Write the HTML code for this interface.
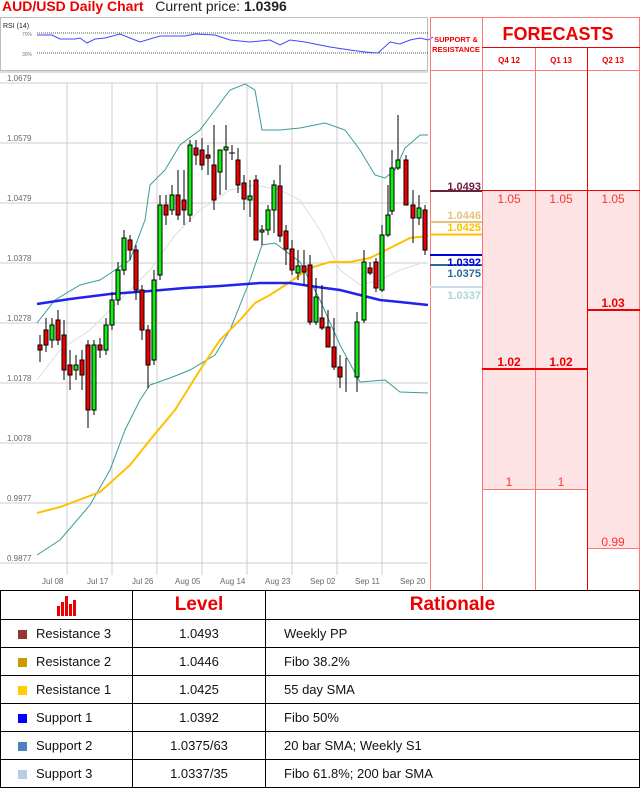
<!DOCTYPE html>
<html><head><meta charset="utf-8"><style>
*{margin:0;padding:0;box-sizing:border-box}
body{width:640px;height:786px;background:#fff;font-family:"Liberation Sans",sans-serif;position:relative;overflow:hidden}
.abs{position:absolute}
table{border-collapse:collapse;position:absolute;left:0;top:590px;width:640px;table-layout:fixed}
td{border:1px solid #000;height:28px;font-size:13px;color:#111;padding:0;line-height:14px}
.c{text-align:center}
.sq{display:inline-block;width:9px;height:9px;margin:0 9px 0 17px;vertical-align:-1px}
.hd{color:#e00;font-weight:bold;font-size:19px;text-align:center;height:29px}
</style></head><body>
<div class="abs" style="left:2px;top:-2px;font-size:14px"><span style="color:#e00;font-weight:bold">AUD/USD Daily Chart</span>&nbsp;&nbsp; <span style="color:#222">Current price: <b>1.0396</b></span></div>

<svg class="abs" style="left:0;top:0" width="640" height="590">
<rect x="0.5" y="17.5" width="427" height="53" fill="#fff" stroke="#bbb"/>
<text x="3" y="28" font-size="7" fill="#222">RSI (14)</text>
<text x="22" y="36" font-size="5" fill="#777">70%</text>
<text x="22" y="56" font-size="5" fill="#777">30%</text>
<line x1="37" y1="33" x2="428" y2="33" stroke="#555" stroke-dasharray="1,1"/>
<line x1="37" y1="53" x2="428" y2="53" stroke="#555" stroke-dasharray="1,1"/>
<polyline fill="none" stroke="#44f" stroke-width="1" points="37,35 52,35 60,39 75,39 80,38 87,43 95,39 105,38 120,34 140,42 160,36 185,36 195,34 215,35 230,40 250,42 270,40 280,45 290,40 305,42 330,47 350,50 365,52 378,53 390,42 400,44 410,40 420,38 428,40 433,37"/>
<g stroke="#ccc" stroke-width="1">
<line x1="0" y1="83" x2="428" y2="83"/><line x1="0" y1="143" x2="428" y2="143"/><line x1="0" y1="203" x2="428" y2="203"/><line x1="0" y1="263" x2="428" y2="263"/><line x1="0" y1="323" x2="428" y2="323"/><line x1="0" y1="383" x2="428" y2="383"/><line x1="0" y1="443" x2="428" y2="443"/><line x1="0" y1="503" x2="428" y2="503"/><line x1="0" y1="563" x2="428" y2="563"/>
<line x1="67" y1="83" x2="67" y2="575"/><line x1="112" y1="83" x2="112" y2="575"/><line x1="157" y1="83" x2="157" y2="575"/><line x1="202" y1="83" x2="202" y2="575"/><line x1="247" y1="83" x2="247" y2="575"/><line x1="292" y1="83" x2="292" y2="575"/><line x1="337" y1="83" x2="337" y2="575"/><line x1="382" y1="83" x2="382" y2="575"/>
</g>
<line x1="0" y1="72" x2="428" y2="72" stroke="#bbb"/>
<g font-size="8" fill="#666">
<text x="7" y="81">1.0679</text><text x="7" y="141">1.0579</text><text x="7" y="201">1.0479</text><text x="7" y="261">1.0378</text><text x="7" y="321">1.0278</text><text x="7" y="381">1.0178</text><text x="7" y="441">1.0078</text><text x="7" y="501">0.9977</text><text x="7" y="561">0.9877</text>
<text x="42" y="584">Jul 08</text><text x="87" y="584">Jul 17</text><text x="132" y="584">Jul 26</text><text x="175" y="584">Aug 05</text><text x="220" y="584">Aug 14</text><text x="265" y="584">Aug 23</text><text x="310" y="584">Sep 02</text><text x="355" y="584">Sep 11</text><text x="400" y="584">Sep 20</text>
</g>
<polyline fill="none" stroke="#ddd" points="37,380 60,350 90,330 120,300 150,270 175,235 200,210 230,190 255,185 280,190 300,200 320,230 340,270 360,285 380,280 400,270 425,262"/>
<polyline fill="none" stroke="#3a9a9a" points="37,323 55,300 80,285 100,280 115,270 130,260 145,220 150,185 165,170 180,145 200,130 215,110 230,90 245,84 255,90 262,130 280,130 300,128 325,123 345,130 360,150 375,175 385,178 395,170 405,148 420,135 428,135"/>
<polyline fill="none" stroke="#3a9a9a" points="37,555 60,540 90,505 110,470 125,430 140,400 150,385 170,378 190,370 215,355 230,330 250,280 262,245 275,243 300,262 320,300 340,345 360,382 385,380 400,392 428,393"/>
<polyline fill="none" stroke="#ffc000" stroke-width="2" points="37,513 60,507 100,492 130,465 150,440 175,410 200,370 220,340 240,320 255,303 270,295 290,282 310,268 330,262 350,262 370,258 390,248 410,238 428,236"/>
<polyline fill="none" stroke="#22e" stroke-width="2.5" points="37,304 70,299 110,294 150,291 185,288 220,286 260,283 290,283 310,286 340,290 360,295 380,300 400,302 428,305"/>
<g stroke="#000" stroke-width="1">
<line x1="40" y1="335" x2="40" y2="362"/><rect x="38" y="345" width="4" height="5" fill="#e00"/>
<line x1="46" y1="318" x2="46" y2="352"/><rect x="44" y="330" width="4" height="15" fill="#e00"/>
<line x1="52" y1="318" x2="52" y2="348"/><rect x="50" y="325" width="4" height="15" fill="#1e1"/>
<line x1="58" y1="310" x2="58" y2="345"/><rect x="56" y="320" width="4" height="20" fill="#e00"/>
<line x1="64" y1="320" x2="64" y2="380"/><rect x="62" y="335" width="4" height="35" fill="#e00"/>
<line x1="70" y1="350" x2="70" y2="390"/><rect x="68" y="365" width="4" height="10" fill="#e00"/>
<line x1="76" y1="355" x2="76" y2="380"/><rect x="74" y="365" width="4" height="5" fill="#1e1"/>
<line x1="82" y1="350" x2="82" y2="390"/><rect x="80" y="360" width="4" height="15" fill="#e00"/>
<line x1="88" y1="340" x2="88" y2="428"/><rect x="86" y="345" width="4" height="65" fill="#e00"/>
<line x1="94" y1="340" x2="94" y2="415"/><rect x="92" y="345" width="4" height="65" fill="#1e1"/>
<line x1="100" y1="338" x2="100" y2="358"/><rect x="98" y="345" width="4" height="5" fill="#e00"/>
<line x1="106" y1="318" x2="106" y2="355"/><rect x="104" y="325" width="4" height="25" fill="#1e1"/>
<line x1="112" y1="292" x2="112" y2="330"/><rect x="110" y="300" width="4" height="25" fill="#1e1"/>
<line x1="118" y1="262" x2="118" y2="305"/><rect x="116" y="270" width="4" height="30" fill="#1e1"/>
<line x1="124" y1="230" x2="124" y2="275"/><rect x="122" y="238" width="4" height="32" fill="#1e1"/>
<line x1="130" y1="235" x2="130" y2="260"/><rect x="128" y="240" width="4" height="10" fill="#e00"/>
<line x1="136" y1="245" x2="136" y2="300"/><rect x="134" y="250" width="4" height="40" fill="#e00"/>
<line x1="142" y1="285" x2="142" y2="340"/><rect x="140" y="290" width="4" height="40" fill="#e00"/>
<line x1="148" y1="325" x2="148" y2="388"/><rect x="146" y="330" width="4" height="35" fill="#e00"/>
<line x1="154" y1="270" x2="154" y2="365"/><rect x="152" y="280" width="4" height="80" fill="#1e1"/>
<line x1="160" y1="195" x2="160" y2="280"/><rect x="158" y="205" width="4" height="70" fill="#1e1"/>
<line x1="166" y1="195" x2="166" y2="225"/><rect x="164" y="205" width="4" height="10" fill="#e00"/>
<line x1="172" y1="185" x2="172" y2="215"/><rect x="170" y="195" width="4" height="15" fill="#1e1"/>
<line x1="178" y1="170" x2="178" y2="220"/><rect x="176" y="195" width="4" height="20" fill="#e00"/>
<line x1="184" y1="170" x2="184" y2="225"/><rect x="182" y="200" width="4" height="10" fill="#e00"/>
<line x1="190" y1="140" x2="190" y2="222"/><rect x="188" y="145" width="4" height="70" fill="#1e1"/>
<line x1="196" y1="140" x2="196" y2="165"/><rect x="194" y="148" width="4" height="7" fill="#e00"/>
<line x1="202" y1="138" x2="202" y2="170"/><rect x="200" y="150" width="4" height="15" fill="#e00"/>
<line x1="208" y1="145" x2="208" y2="175"/><rect x="206" y="155" width="4" height="3" fill="#e00"/>
<line x1="214" y1="125" x2="214" y2="210"/><rect x="212" y="165" width="4" height="35" fill="#e00"/>
<line x1="220" y1="160" x2="220" y2="195"/><rect x="218" y="150" width="4" height="22" fill="#1e1"/>
<line x1="226" y1="125" x2="226" y2="190"/><rect x="224" y="147" width="4" height="3" fill="#1e1"/>
<line x1="232" y1="145" x2="232" y2="160"/><line x1="229" y1="153" x2="235" y2="153"/>
<line x1="238" y1="148" x2="238" y2="193"/><rect x="236" y="160" width="4" height="25" fill="#e00"/>
<line x1="244" y1="175" x2="244" y2="210"/><rect x="242" y="183" width="4" height="16" fill="#e00"/>
<line x1="250" y1="180" x2="250" y2="217"/><rect x="248" y="196" width="4" height="4" fill="#1e1"/>
<line x1="256" y1="175" x2="256" y2="240"/><rect x="254" y="180" width="4" height="60" fill="#e00"/>
<line x1="262" y1="225" x2="262" y2="245"/><rect x="260" y="230" width="4" height="2" fill="#1e1"/>
<line x1="268" y1="205" x2="268" y2="235"/><rect x="266" y="210" width="4" height="20" fill="#1e1"/>
<line x1="274" y1="180" x2="274" y2="233"/><rect x="272" y="185" width="4" height="25" fill="#1e1"/>
<line x1="280" y1="165" x2="280" y2="242"/><rect x="278" y="186" width="4" height="50" fill="#e00"/>
<line x1="286" y1="225" x2="286" y2="265"/><rect x="284" y="231" width="4" height="18" fill="#e00"/>
<line x1="292" y1="240" x2="292" y2="275"/><rect x="290" y="249" width="4" height="21" fill="#e00"/>
<line x1="298" y1="250" x2="298" y2="280"/><rect x="296" y="266" width="4" height="7" fill="#1e1"/>
<line x1="304" y1="250" x2="304" y2="285"/><rect x="302" y="266" width="4" height="6" fill="#e00"/>
<line x1="310" y1="255" x2="310" y2="325"/><rect x="308" y="265" width="4" height="57" fill="#e00"/>
<line x1="316" y1="278" x2="316" y2="325"/><rect x="314" y="297" width="4" height="25" fill="#1e1"/>
<line x1="322" y1="285" x2="322" y2="330"/><rect x="320" y="318" width="4" height="10" fill="#e00"/>
<line x1="328" y1="310" x2="328" y2="345"/><rect x="326" y="327" width="4" height="20" fill="#e00"/>
<line x1="334" y1="318" x2="334" y2="370"/><rect x="332" y="347" width="4" height="20" fill="#e00"/>
<line x1="340" y1="355" x2="340" y2="388"/><rect x="338" y="367" width="4" height="10" fill="#e00"/>
<line x1="346" y1="358" x2="346" y2="392"/><rect x="344" y="377" width="4" height="0" fill="#1e1"/>
<line x1="357" y1="312" x2="357" y2="392"/><rect x="355" y="322" width="4" height="55" fill="#1e1"/>
<line x1="364" y1="250" x2="364" y2="323"/><rect x="362" y="262" width="4" height="58" fill="#1e1"/>
<line x1="370" y1="262" x2="370" y2="275"/><rect x="368" y="268" width="4" height="5" fill="#e00"/>
<line x1="376" y1="258" x2="376" y2="292"/><rect x="374" y="262" width="4" height="26" fill="#e00"/>
<line x1="382" y1="225" x2="382" y2="292"/><rect x="380" y="235" width="4" height="55" fill="#1e1"/>
<line x1="388" y1="185" x2="388" y2="237"/><rect x="386" y="215" width="4" height="20" fill="#1e1"/>
<line x1="392" y1="150" x2="392" y2="215"/><rect x="390" y="168" width="4" height="43" fill="#1e1"/>
<line x1="398" y1="115" x2="398" y2="170"/><rect x="396" y="160" width="4" height="8" fill="#1e1"/>
<line x1="406" y1="155" x2="406" y2="205"/><rect x="404" y="160" width="4" height="45" fill="#e00"/>
<line x1="413" y1="190" x2="413" y2="243"/><rect x="411" y="205" width="4" height="13" fill="#e00"/>
<line x1="419" y1="195" x2="419" y2="225"/><rect x="417" y="208" width="4" height="10" fill="#1e1"/>
<line x1="425" y1="205" x2="425" y2="255"/><rect x="423" y="210" width="4" height="40" fill="#e00"/>
</g>
<rect x="482" y="190" width="105" height="300" fill="#fde3e3"/>
<rect x="587" y="190" width="53" height="358" fill="#fde3e3"/>
<g stroke="#f77" stroke-width="1">
<line x1="430.5" y1="17" x2="430.5" y2="590"/>
<line x1="482.5" y1="17" x2="482.5" y2="590"/>
<line x1="535.5" y1="47" x2="535.5" y2="590"/>
<line x1="639.5" y1="17" x2="639.5" y2="590"/>
<line x1="430" y1="17.5" x2="640" y2="17.5"/>
<line x1="430" y1="70.5" x2="640" y2="70.5"/>
<line x1="482" y1="489.5" x2="587" y2="489.5"/>
<line x1="587" y1="548.5" x2="640" y2="548.5"/>
</g>
<g stroke="#e00" stroke-width="1">
<line x1="482" y1="47.5" x2="640" y2="47.5"/>
<line x1="587.5" y1="47" x2="587.5" y2="590"/>
<line x1="482" y1="190.5" x2="640" y2="190.5"/>
</g>
<line x1="482" y1="369" x2="587" y2="369" stroke="#e00" stroke-width="2"/>
<line x1="587" y1="310" x2="640" y2="310" stroke="#e00" stroke-width="2"/>
<text x="456" y="42" font-size="7.5" font-weight="bold" fill="#e00" text-anchor="middle">SUPPORT &amp;</text>
<text x="456" y="52" font-size="7.5" font-weight="bold" fill="#e00" text-anchor="middle">RESISTANCE</text>
<text x="558" y="40" font-size="18" font-weight="bold" fill="#e00" text-anchor="middle">FORECASTS</text>
<g font-size="8" font-weight="bold" fill="#e00" text-anchor="middle"><text x="509" y="63">Q4 12</text><text x="561" y="63">Q1 13</text><text x="613" y="63">Q2 13</text></g>
<g font-size="12" fill="#f33" text-anchor="middle">
<text x="509" y="203">1.05</text><text x="561" y="203">1.05</text><text x="613" y="203">1.05</text>
<text x="509" y="486">1</text><text x="561" y="486">1</text><text x="613" y="546">0.99</text>
</g>
<g font-size="12" font-weight="bold" fill="#e00" text-anchor="middle"><text x="509" y="366">1.02</text><text x="561" y="366">1.02</text><text x="613" y="307">1.03</text></g>
<line x1="430" y1="191" x2="482" y2="191" stroke="#6b2040" stroke-width="2"/>
<line x1="430" y1="222" x2="482" y2="222" stroke="#e6c080" stroke-width="2"/>
<line x1="430" y1="234.5" x2="482" y2="234.5" stroke="#ffc000" stroke-width="2"/>
<line x1="430" y1="255" x2="482" y2="255" stroke="#00d" stroke-width="2"/>
<line x1="430" y1="265" x2="482" y2="265" stroke="#2a6a9a" stroke-width="2"/>
<line x1="430" y1="287" x2="482" y2="287" stroke="#cde" stroke-width="2"/>
<g font-size="11" font-weight="bold" text-anchor="end">
<text x="481" y="190" fill="#6b2040">1.0493</text>
<text x="481" y="219" fill="#e6c080">1.0446</text>
<text x="481" y="231" fill="#ffc000">1.0425</text>
<text x="481" y="266" fill="#00d">1.0392</text>
<text x="481" y="277" fill="#2a6a9a">1.0375</text>
<text x="481" y="299" fill="#acd8d8">1.0337</text>
</g>
</svg>

<table>
<colgroup><col style="width:132px"><col style="width:133px"><col></colgroup>
<tr><td class="c hd"><svg width="22" height="22" viewBox="0 0 22 22" style="vertical-align:middle"><g fill="#e00"><rect x="1" y="12" width="3" height="10"/><rect x="5" y="8" width="3" height="14"/><rect x="9" y="2" width="3" height="20"/><rect x="13" y="10" width="3" height="12"/><rect x="17" y="6" width="3" height="16"/></g></svg></td><td class="hd">Level</td><td class="hd">Rationale</td></tr>
<tr><td><span class="sq" style="background:#943634"></span>Resistance 3</td><td class="c">1.0493</td><td style="padding-left:18px">Weekly PP</td></tr>
<tr><td><span class="sq" style="background:#cc9900"></span>Resistance 2</td><td class="c">1.0446</td><td style="padding-left:18px">Fibo 38.2%</td></tr>
<tr><td><span class="sq" style="background:#ffcc00"></span>Resistance 1</td><td class="c">1.0425</td><td style="padding-left:18px">55 day SMA</td></tr>
<tr><td><span class="sq" style="background:#0000ff"></span>Support 1</td><td class="c">1.0392</td><td style="padding-left:18px">Fibo 50%</td></tr>
<tr><td><span class="sq" style="background:#4f81bd"></span>Support 2</td><td class="c">1.0375/63</td><td style="padding-left:18px">20 bar SMA; Weekly S1</td></tr>
<tr><td><span class="sq" style="background:#b8cce4"></span>Support 3</td><td class="c">1.0337/35</td><td style="padding-left:18px">Fibo 61.8%; 200 bar SMA</td></tr>
</table>
</body></html>
